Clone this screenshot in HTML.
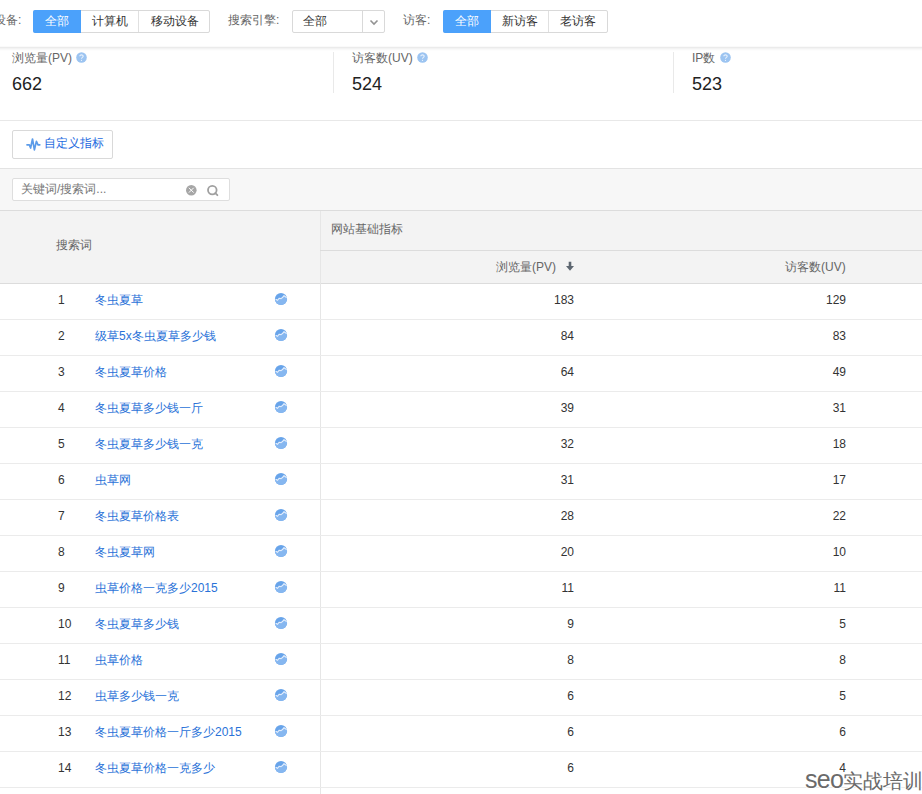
<!DOCTYPE html>
<html><head><meta charset="utf-8">
<style>
*{margin:0;padding:0;box-sizing:border-box}
html,body{width:922px;height:794px;overflow:hidden;background:#fff;font-family:"Liberation Sans",sans-serif;font-size:12px;color:#333}
.a{position:absolute}
.lbl{position:absolute;color:#666;font-size:12px;line-height:14px;white-space:nowrap}
.grp{position:absolute;top:10px;height:23px;border:1px solid #d9d9d9;border-radius:2px;background:#fff}
.grp span{position:absolute;top:0;height:21px;line-height:20px;text-align:center;font-size:12px;color:#333;white-space:nowrap}
.grp span.on{background:#4ba1fb;color:#fff;top:-1px;height:23px;line-height:22px;border-radius:2px 0 0 2px}
.grp i{position:absolute;top:0;width:1px;height:21px;background:#e0e0e0}
.stat .t{position:absolute;color:#666;font-size:12px;line-height:14px;white-space:nowrap}
.stat .v{position:absolute;color:#222;font-size:18px;line-height:20px}
.q{position:absolute}
.vd{position:absolute;width:1px;background:#e9e9e9;top:52px;height:41px}
.r{position:absolute;left:0;width:922px;height:37px;border-bottom:1px solid #ebebeb}
.r span{position:absolute;top:10px;line-height:14px;font-size:12px;white-space:nowrap}
.r .n{left:58px;color:#333}
.r .k{left:95px;color:#2a72d8}
.r .p{right:348px;color:#333}
.r .u{right:76px;color:#333}
.r .ic{position:absolute;left:274px;top:9px}
</style></head><body>
<!-- top bar -->
<div class="lbl" style="left:-6px;top:13px">设备:</div>
<div class="grp" style="left:33px;width:177px">
  <span class="on" style="left:-1px;width:48px">全部</span><span style="left:47px;width:57px">计算机</span><i style="left:104px"></i><span style="left:105px;width:71px">移动设备</span>
</div>
<div class="lbl" style="left:228px;top:13px">搜索引擎:</div>
<div class="a" style="left:292px;top:10px;width:93px;height:23px;border:1px solid #d9d9d9;border-radius:2px;background:#fff">
  <div class="a" style="left:10px;top:3px;line-height:14px;color:#333">全部</div>
  <div class="a" style="left:69px;top:0;width:1px;height:21px;background:#d9d9d9"></div>
  <svg class="a" style="left:76px;top:8px" width="10" height="7" viewBox="0 0 10 7"><path d="M1.5 1.5 L5 5 L8.5 1.5" fill="none" stroke="#939393" stroke-width="1.6"/></svg>
</div>
<div class="lbl" style="left:403px;top:13px">访客:</div>
<div class="grp" style="left:443px;width:165px">
  <span class="on" style="left:-1px;width:48px">全部</span><span style="left:47px;width:57px">新访客</span><i style="left:104px"></i><span style="left:105px;width:58px">老访客</span>
</div>
<div class="a" style="left:0;top:46px;width:922px;height:1px;background:#fafafa"></div>
<div class="a" style="left:0;top:47px;width:922px;height:1px;background:#ebebeb"></div>
<div class="a" style="left:0;top:48px;width:922px;height:1px;background:#f3f3f3"></div>
<div class="a" style="left:0;top:49px;width:922px;height:1px;background:#f9f9f9"></div>
<div class="a" style="left:0;top:50px;width:922px;height:1px;background:#fdfdfd"></div>

<!-- stats -->
<div class="stat">
  <div class="t" style="left:12px;top:51px">浏览量(PV)</div>
  <svg class="q" style="left:76px;top:52px" width="11" height="11" viewBox="0 0 11 11"><circle cx="5.5" cy="5.5" r="5.3" fill="#9cc4f1"/><path d="M3.8 4.2 C3.8 2.4 7.2 2.4 7.2 4.2 C7.2 5.4 5.5 5.4 5.5 6.8" fill="none" stroke="#e6f0fc" stroke-width="1.1"/><circle cx="5.5" cy="8.4" r="0.6" fill="#e6f0fc"/></svg>
  <div class="v" style="left:12px;top:74px">662</div>
  <div class="vd" style="left:333px"></div>
  <div class="t" style="left:352px;top:51px">访客数(UV)</div>
  <svg class="q" style="left:417px;top:52px" width="11" height="11" viewBox="0 0 11 11"><circle cx="5.5" cy="5.5" r="5.3" fill="#9cc4f1"/><path d="M3.8 4.2 C3.8 2.4 7.2 2.4 7.2 4.2 C7.2 5.4 5.5 5.4 5.5 6.8" fill="none" stroke="#e6f0fc" stroke-width="1.1"/><circle cx="5.5" cy="8.4" r="0.6" fill="#e6f0fc"/></svg>
  <div class="v" style="left:352px;top:74px">524</div>
  <div class="vd" style="left:673px"></div>
  <div class="t" style="left:692px;top:51px">IP数</div>
  <svg class="q" style="left:720px;top:52px" width="11" height="11" viewBox="0 0 11 11"><circle cx="5.5" cy="5.5" r="5.3" fill="#9cc4f1"/><path d="M3.8 4.2 C3.8 2.4 7.2 2.4 7.2 4.2 C7.2 5.4 5.5 5.4 5.5 6.8" fill="none" stroke="#e6f0fc" stroke-width="1.1"/><circle cx="5.5" cy="8.4" r="0.6" fill="#e6f0fc"/></svg>
  <div class="v" style="left:692px;top:74px">523</div>
</div>
<div class="a" style="left:0;top:120px;width:922px;height:1px;background:#e8e8e8"></div>

<!-- toolbar -->
<div class="a" style="left:12px;top:130px;width:101px;height:29px;border:1px solid #d9d9d9;border-radius:2px"></div>
<svg class="a" style="left:25px;top:137px" width="17" height="15" viewBox="0 0 17 15"><path d="M2 7.8 L4.3 7.8 L5.6 11 L7.5 2 L9.4 12.9 L11.4 4.4 L13 7.8 L14.8 7.8" fill="none" stroke="#5b9be9" stroke-width="1.7" stroke-linejoin="round" stroke-linecap="round"/></svg>
<div class="a" style="left:44px;top:136px;color:#1d6ae0;line-height:14px">自定义指标</div>

<div class="a" style="left:0;top:168px;width:922px;height:43px;background:#f7f7f7;border-top:1px solid #e3e3e3"></div>
<div class="a" style="left:12px;top:178px;width:218px;height:23px;background:#fff;border:1px solid #dedede;border-radius:2px"></div>
<div class="a" style="left:21px;top:182px;color:#777;line-height:14px">关键词/搜索词...</div>
<svg class="a" style="left:185px;top:184px" width="13" height="13" viewBox="0 0 13 13"><circle cx="6.3" cy="6.2" r="5.3" fill="#a6a6a6"/><path d="M3.9 3.8 L8.7 8.6 M8.7 3.8 L3.9 8.6" stroke="#fff" stroke-width="1"/></svg>
<svg class="a" style="left:206px;top:184px" width="14" height="14" viewBox="0 0 14 14"><circle cx="6.3" cy="6.1" r="4.3" fill="none" stroke="#a0a0a0" stroke-width="1.8"/><path d="M9.3 9.1 L11.4 11.2" stroke="#a0a0a0" stroke-width="1.8" stroke-linecap="round"/></svg>

<!-- table header -->
<div class="a" style="left:0;top:210px;width:922px;height:74px;background:#f3f3f3;border-top:1px solid #dcdcdc;border-bottom:1px solid #dcdcdc"></div>
<div class="a" style="left:320px;top:211px;width:1px;height:583px;background:#e6e6e6"></div>
<div class="a" style="left:320px;top:250px;width:602px;height:1px;background:#dcdcdc"></div>
<div class="lbl" style="left:56px;top:238px">搜索词</div>
<div class="lbl" style="left:331px;top:222px">网站基础指标</div>
<div class="lbl" style="left:496px;top:260px">浏览量(PV)</div>
<svg class="a" style="left:565px;top:261px" width="10" height="11" viewBox="0 0 10 11"><path d="M3.7 0.7 H6.3 V5 H9 L5 9.7 L1 5 H3.7 Z" fill="#5d6670"/></svg>
<div class="lbl" style="left:785px;top:260px">访客数(UV)</div>
<div id="rows">
<div class="r" style="top:283px"><span class="n">1</span><span class="k">冬虫夏草</span><svg class="ic" width="14" height="14" viewBox="0 0 14 14"><defs><clipPath id="cc0"><circle cx="7" cy="7" r="6.1"/></clipPath></defs><g clip-path="url(#cc0)"><rect width="14" height="14" fill="#68a4ea"/><path d="M0 8 L2.3 7.5 L3.4 8.4 L5.3 6.2 L7.1 6.6 L8.7 5.3 L10 3.7 L12.5 5.5 L14 6 V14 H0Z" fill="#86b7f0"/><path d="M1.5 7.2 L2.3 7.5 L3.4 8.4 L5.3 6.2 L7.1 6.6 L8.7 5.3 L10 3.7 L12.5 5.5 L14 6" fill="none" stroke="#e2edfc" stroke-width="1.1" stroke-linejoin="round"/></g></svg><span class="p">183</span><span class="u">129</span></div>
<div class="r" style="top:319px"><span class="n">2</span><span class="k">级草5x冬虫夏草多少钱</span><svg class="ic" width="14" height="14" viewBox="0 0 14 14"><defs><clipPath id="cc1"><circle cx="7" cy="7" r="6.1"/></clipPath></defs><g clip-path="url(#cc1)"><rect width="14" height="14" fill="#68a4ea"/><path d="M0 8 L2.3 7.5 L3.4 8.4 L5.3 6.2 L7.1 6.6 L8.7 5.3 L10 3.7 L12.5 5.5 L14 6 V14 H0Z" fill="#86b7f0"/><path d="M1.5 7.2 L2.3 7.5 L3.4 8.4 L5.3 6.2 L7.1 6.6 L8.7 5.3 L10 3.7 L12.5 5.5 L14 6" fill="none" stroke="#e2edfc" stroke-width="1.1" stroke-linejoin="round"/></g></svg><span class="p">84</span><span class="u">83</span></div>
<div class="r" style="top:355px"><span class="n">3</span><span class="k">冬虫夏草价格</span><svg class="ic" width="14" height="14" viewBox="0 0 14 14"><defs><clipPath id="cc2"><circle cx="7" cy="7" r="6.1"/></clipPath></defs><g clip-path="url(#cc2)"><rect width="14" height="14" fill="#68a4ea"/><path d="M0 8 L2.3 7.5 L3.4 8.4 L5.3 6.2 L7.1 6.6 L8.7 5.3 L10 3.7 L12.5 5.5 L14 6 V14 H0Z" fill="#86b7f0"/><path d="M1.5 7.2 L2.3 7.5 L3.4 8.4 L5.3 6.2 L7.1 6.6 L8.7 5.3 L10 3.7 L12.5 5.5 L14 6" fill="none" stroke="#e2edfc" stroke-width="1.1" stroke-linejoin="round"/></g></svg><span class="p">64</span><span class="u">49</span></div>
<div class="r" style="top:391px"><span class="n">4</span><span class="k">冬虫夏草多少钱一斤</span><svg class="ic" width="14" height="14" viewBox="0 0 14 14"><defs><clipPath id="cc3"><circle cx="7" cy="7" r="6.1"/></clipPath></defs><g clip-path="url(#cc3)"><rect width="14" height="14" fill="#68a4ea"/><path d="M0 8 L2.3 7.5 L3.4 8.4 L5.3 6.2 L7.1 6.6 L8.7 5.3 L10 3.7 L12.5 5.5 L14 6 V14 H0Z" fill="#86b7f0"/><path d="M1.5 7.2 L2.3 7.5 L3.4 8.4 L5.3 6.2 L7.1 6.6 L8.7 5.3 L10 3.7 L12.5 5.5 L14 6" fill="none" stroke="#e2edfc" stroke-width="1.1" stroke-linejoin="round"/></g></svg><span class="p">39</span><span class="u">31</span></div>
<div class="r" style="top:427px"><span class="n">5</span><span class="k">冬虫夏草多少钱一克</span><svg class="ic" width="14" height="14" viewBox="0 0 14 14"><defs><clipPath id="cc4"><circle cx="7" cy="7" r="6.1"/></clipPath></defs><g clip-path="url(#cc4)"><rect width="14" height="14" fill="#68a4ea"/><path d="M0 8 L2.3 7.5 L3.4 8.4 L5.3 6.2 L7.1 6.6 L8.7 5.3 L10 3.7 L12.5 5.5 L14 6 V14 H0Z" fill="#86b7f0"/><path d="M1.5 7.2 L2.3 7.5 L3.4 8.4 L5.3 6.2 L7.1 6.6 L8.7 5.3 L10 3.7 L12.5 5.5 L14 6" fill="none" stroke="#e2edfc" stroke-width="1.1" stroke-linejoin="round"/></g></svg><span class="p">32</span><span class="u">18</span></div>
<div class="r" style="top:463px"><span class="n">6</span><span class="k">虫草网</span><svg class="ic" width="14" height="14" viewBox="0 0 14 14"><defs><clipPath id="cc5"><circle cx="7" cy="7" r="6.1"/></clipPath></defs><g clip-path="url(#cc5)"><rect width="14" height="14" fill="#68a4ea"/><path d="M0 8 L2.3 7.5 L3.4 8.4 L5.3 6.2 L7.1 6.6 L8.7 5.3 L10 3.7 L12.5 5.5 L14 6 V14 H0Z" fill="#86b7f0"/><path d="M1.5 7.2 L2.3 7.5 L3.4 8.4 L5.3 6.2 L7.1 6.6 L8.7 5.3 L10 3.7 L12.5 5.5 L14 6" fill="none" stroke="#e2edfc" stroke-width="1.1" stroke-linejoin="round"/></g></svg><span class="p">31</span><span class="u">17</span></div>
<div class="r" style="top:499px"><span class="n">7</span><span class="k">冬虫夏草价格表</span><svg class="ic" width="14" height="14" viewBox="0 0 14 14"><defs><clipPath id="cc6"><circle cx="7" cy="7" r="6.1"/></clipPath></defs><g clip-path="url(#cc6)"><rect width="14" height="14" fill="#68a4ea"/><path d="M0 8 L2.3 7.5 L3.4 8.4 L5.3 6.2 L7.1 6.6 L8.7 5.3 L10 3.7 L12.5 5.5 L14 6 V14 H0Z" fill="#86b7f0"/><path d="M1.5 7.2 L2.3 7.5 L3.4 8.4 L5.3 6.2 L7.1 6.6 L8.7 5.3 L10 3.7 L12.5 5.5 L14 6" fill="none" stroke="#e2edfc" stroke-width="1.1" stroke-linejoin="round"/></g></svg><span class="p">28</span><span class="u">22</span></div>
<div class="r" style="top:535px"><span class="n">8</span><span class="k">冬虫夏草网</span><svg class="ic" width="14" height="14" viewBox="0 0 14 14"><defs><clipPath id="cc7"><circle cx="7" cy="7" r="6.1"/></clipPath></defs><g clip-path="url(#cc7)"><rect width="14" height="14" fill="#68a4ea"/><path d="M0 8 L2.3 7.5 L3.4 8.4 L5.3 6.2 L7.1 6.6 L8.7 5.3 L10 3.7 L12.5 5.5 L14 6 V14 H0Z" fill="#86b7f0"/><path d="M1.5 7.2 L2.3 7.5 L3.4 8.4 L5.3 6.2 L7.1 6.6 L8.7 5.3 L10 3.7 L12.5 5.5 L14 6" fill="none" stroke="#e2edfc" stroke-width="1.1" stroke-linejoin="round"/></g></svg><span class="p">20</span><span class="u">10</span></div>
<div class="r" style="top:571px"><span class="n">9</span><span class="k">虫草价格一克多少2015</span><svg class="ic" width="14" height="14" viewBox="0 0 14 14"><defs><clipPath id="cc8"><circle cx="7" cy="7" r="6.1"/></clipPath></defs><g clip-path="url(#cc8)"><rect width="14" height="14" fill="#68a4ea"/><path d="M0 8 L2.3 7.5 L3.4 8.4 L5.3 6.2 L7.1 6.6 L8.7 5.3 L10 3.7 L12.5 5.5 L14 6 V14 H0Z" fill="#86b7f0"/><path d="M1.5 7.2 L2.3 7.5 L3.4 8.4 L5.3 6.2 L7.1 6.6 L8.7 5.3 L10 3.7 L12.5 5.5 L14 6" fill="none" stroke="#e2edfc" stroke-width="1.1" stroke-linejoin="round"/></g></svg><span class="p">11</span><span class="u">11</span></div>
<div class="r" style="top:607px"><span class="n">10</span><span class="k">冬虫夏草多少钱</span><svg class="ic" width="14" height="14" viewBox="0 0 14 14"><defs><clipPath id="cc9"><circle cx="7" cy="7" r="6.1"/></clipPath></defs><g clip-path="url(#cc9)"><rect width="14" height="14" fill="#68a4ea"/><path d="M0 8 L2.3 7.5 L3.4 8.4 L5.3 6.2 L7.1 6.6 L8.7 5.3 L10 3.7 L12.5 5.5 L14 6 V14 H0Z" fill="#86b7f0"/><path d="M1.5 7.2 L2.3 7.5 L3.4 8.4 L5.3 6.2 L7.1 6.6 L8.7 5.3 L10 3.7 L12.5 5.5 L14 6" fill="none" stroke="#e2edfc" stroke-width="1.1" stroke-linejoin="round"/></g></svg><span class="p">9</span><span class="u">5</span></div>
<div class="r" style="top:643px"><span class="n">11</span><span class="k">虫草价格</span><svg class="ic" width="14" height="14" viewBox="0 0 14 14"><defs><clipPath id="cc10"><circle cx="7" cy="7" r="6.1"/></clipPath></defs><g clip-path="url(#cc10)"><rect width="14" height="14" fill="#68a4ea"/><path d="M0 8 L2.3 7.5 L3.4 8.4 L5.3 6.2 L7.1 6.6 L8.7 5.3 L10 3.7 L12.5 5.5 L14 6 V14 H0Z" fill="#86b7f0"/><path d="M1.5 7.2 L2.3 7.5 L3.4 8.4 L5.3 6.2 L7.1 6.6 L8.7 5.3 L10 3.7 L12.5 5.5 L14 6" fill="none" stroke="#e2edfc" stroke-width="1.1" stroke-linejoin="round"/></g></svg><span class="p">8</span><span class="u">8</span></div>
<div class="r" style="top:679px"><span class="n">12</span><span class="k">虫草多少钱一克</span><svg class="ic" width="14" height="14" viewBox="0 0 14 14"><defs><clipPath id="cc11"><circle cx="7" cy="7" r="6.1"/></clipPath></defs><g clip-path="url(#cc11)"><rect width="14" height="14" fill="#68a4ea"/><path d="M0 8 L2.3 7.5 L3.4 8.4 L5.3 6.2 L7.1 6.6 L8.7 5.3 L10 3.7 L12.5 5.5 L14 6 V14 H0Z" fill="#86b7f0"/><path d="M1.5 7.2 L2.3 7.5 L3.4 8.4 L5.3 6.2 L7.1 6.6 L8.7 5.3 L10 3.7 L12.5 5.5 L14 6" fill="none" stroke="#e2edfc" stroke-width="1.1" stroke-linejoin="round"/></g></svg><span class="p">6</span><span class="u">5</span></div>
<div class="r" style="top:715px"><span class="n">13</span><span class="k">冬虫夏草价格一斤多少2015</span><svg class="ic" width="14" height="14" viewBox="0 0 14 14"><defs><clipPath id="cc12"><circle cx="7" cy="7" r="6.1"/></clipPath></defs><g clip-path="url(#cc12)"><rect width="14" height="14" fill="#68a4ea"/><path d="M0 8 L2.3 7.5 L3.4 8.4 L5.3 6.2 L7.1 6.6 L8.7 5.3 L10 3.7 L12.5 5.5 L14 6 V14 H0Z" fill="#86b7f0"/><path d="M1.5 7.2 L2.3 7.5 L3.4 8.4 L5.3 6.2 L7.1 6.6 L8.7 5.3 L10 3.7 L12.5 5.5 L14 6" fill="none" stroke="#e2edfc" stroke-width="1.1" stroke-linejoin="round"/></g></svg><span class="p">6</span><span class="u">6</span></div>
<div class="r" style="top:751px"><span class="n">14</span><span class="k">冬虫夏草价格一克多少</span><svg class="ic" width="14" height="14" viewBox="0 0 14 14"><defs><clipPath id="cc13"><circle cx="7" cy="7" r="6.1"/></clipPath></defs><g clip-path="url(#cc13)"><rect width="14" height="14" fill="#68a4ea"/><path d="M0 8 L2.3 7.5 L3.4 8.4 L5.3 6.2 L7.1 6.6 L8.7 5.3 L10 3.7 L12.5 5.5 L14 6 V14 H0Z" fill="#86b7f0"/><path d="M1.5 7.2 L2.3 7.5 L3.4 8.4 L5.3 6.2 L7.1 6.6 L8.7 5.3 L10 3.7 L12.5 5.5 L14 6" fill="none" stroke="#e2edfc" stroke-width="1.1" stroke-linejoin="round"/></g></svg><span class="p">6</span><span class="u">4</span></div>
</div>
<div class="a" style="left:805px;top:767px;font-size:20px;line-height:24px;font-weight:500;color:#6a6a6a;white-space:nowrap;text-shadow:1px 0 #fff,-1px 0 #fff,0 1px #fff,0 -1px #fff"><span style="font-size:25px;letter-spacing:-0.7px;font-weight:400;position:relative;top:0px">seo</span>实战培训</div>
</body></html>
